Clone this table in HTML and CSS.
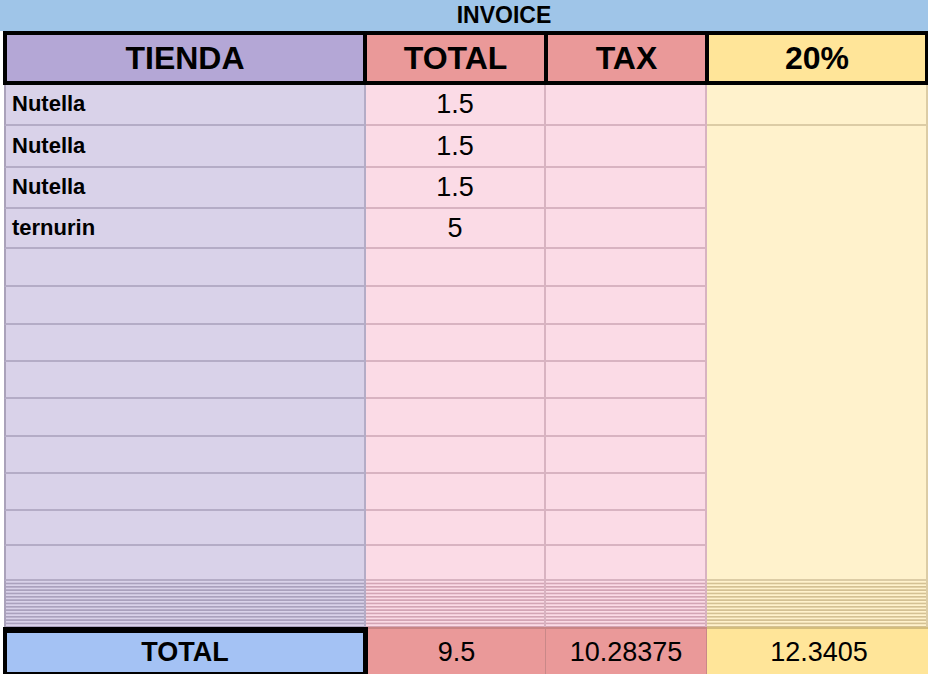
FILE: index.html
```html
<!DOCTYPE html>
<html lang="es">
<head>
<meta charset="utf-8">
<title>Invoice</title>
<link rel="stylesheet" href="styles.css">
</head>
<body>
<div class="sheet">
  <div class="title">INVOICE</div>
  <div class="header">
    <div class="hcell h-store">TIENDA</div>
    <div class="hcell h-total">TOTAL</div>
    <div class="hcell h-total">TAX</div>
    <div class="hcell h-pct">20%</div>
  </div>
  <div class="grid">
    <div class="cell st label">Nutella</div>
    <div class="cell tt num">1.5</div>
    <div class="cell tt"></div>
    <div class="cell px"></div>

    <div class="cell st label">Nutella</div>
    <div class="cell tt num">1.5</div>
    <div class="cell tt"></div>
    <div class="cell px merged"></div>

    <div class="cell st label">Nutella</div>
    <div class="cell tt num">1.5</div>
    <div class="cell tt"></div>

    <div class="cell st label">ternurin</div>
    <div class="cell tt num">5</div>
    <div class="cell tt"></div>

    <div class="cell st"></div><div class="cell tt"></div><div class="cell tt"></div>
    <div class="cell st"></div><div class="cell tt"></div><div class="cell tt"></div>
    <div class="cell st"></div><div class="cell tt"></div><div class="cell tt"></div>
    <div class="cell st"></div><div class="cell tt"></div><div class="cell tt"></div>
    <div class="cell st"></div><div class="cell tt"></div><div class="cell tt"></div>
    <div class="cell st"></div><div class="cell tt"></div><div class="cell tt"></div>
    <div class="cell st"></div><div class="cell tt"></div><div class="cell tt"></div>
    <div class="cell st"></div><div class="cell tt"></div><div class="cell tt"></div>
    <div class="cell st"></div><div class="cell tt"></div><div class="cell tt"></div>

    <div class="cell st dense"></div>
    <div class="cell tt dense"></div>
    <div class="cell tt dense"></div>
    <div class="cell px dense"></div>
  </div>
  <div class="footer">
    <div class="fcell f-store">TOTAL</div>
    <div class="fcell f-total">9.5</div>
    <div class="fcell f-total">10.28375</div>
    <div class="fcell f-pct">12.3405</div>
  </div>
</div>
</body>
</html>
```
FILE: styles.css
```css
html, body {
  margin: 0;
  padding: 0;
  background: #ffffff;
}

body {
  width: 928px;
  height: 674px;
  overflow: hidden;
  font-family: "Liberation Sans", Arial, sans-serif;
  color: #000;
}

.sheet {
  width: 928px;
}

.title {
  height: 31px;
  line-height: 31px;
  background: #9fc5e8;
  padding-left: 80px;
  text-align: center;
  font-weight: bold;
  font-size: 23px;
}

.header {
  display: grid;
  grid-template-columns: 356px 177px 157px 216px;
  column-gap: 4px;
  padding: 4px;
  margin-left: 3px;
  width: 918px;
  background: #000;
}

.hcell {
  height: 46px;
  display: flex;
  align-items: center;
  justify-content: center;
  font-weight: bold;
  font-size: 32px;
}

.h-store { background: #b4a7d6; }
.h-total { background: #ea9999; }
.h-pct { background: #ffe599; }

.grid {
  display: grid;
  margin-left: 4px;
  grid-template-columns: 362px 180px 161px 221px;
  grid-template-rows: 41px 42px 41px 40px 38px 38px 37px 37px 38px 37px 37px 35px 35px 46px;
}

.cell {
  box-sizing: border-box;
  border-bottom: 2px solid;
  border-right: 2px solid;
  display: flex;
  align-items: center;
}

.st {
  background: #d9d2e9;
  border-color: #b4acc6;
  border-left: 2px solid #aaa2ba;
}

.tt {
  background: #fbdbe6;
  border-color: #d8b3c1;
}

.px {
  background: #fff2cc;
  border-color: #dccca5;
}

.merged {
  grid-row: span 12;
}

.label {
  padding-left: 6px;
  padding-bottom: 1px;
  font-weight: bold;
  font-size: 22px;
}

.num {
  justify-content: center;
  font-size: 27px;
}

.dense {
  border-bottom: none;
  background-size: 100% 3.33px;
}

.st.dense {
  background-image: linear-gradient(to bottom, #d9d2e9 0, #d9d2e9 45%, #aaa1bd 45%, #aaa1bd 100%);
}

.tt.dense {
  background-image: linear-gradient(to bottom, #fbdbe6 0, #fbdbe6 45%, #d3a5b5 45%, #d3a5b5 100%);
}

.px.dense {
  background-image: linear-gradient(to bottom, #fff2cc 0, #fff2cc 45%, #d4c194 45%, #d4c194 100%);
}

.footer {
  display: grid;
  margin-left: 3px;
  grid-template-columns: 365px 178px 161px 224px;
  height: 50px;
}

.fcell {
  box-sizing: border-box;
  display: flex;
  align-items: center;
  justify-content: center;
  font-size: 27px;
}

.f-store {
  background: #a4c2f4;
  border-top: 6px solid #000;
  border-left: 4px solid #000;
  border-right: 5px solid #000;
  border-bottom: 5px solid #000;
  font-weight: bold;
  padding-bottom: 1px;
}

.f-total {
  background: #ea9999;
  border-top: 2px solid #c98585;
  border-right: 1px solid #c98888;
  padding-top: 4px;
  padding-bottom: 6px;
}

.f-pct {
  background: #ffe599;
  border-top: 2px solid #d4bd7c;
  padding-top: 4px;
  padding-bottom: 6px;
}
```
